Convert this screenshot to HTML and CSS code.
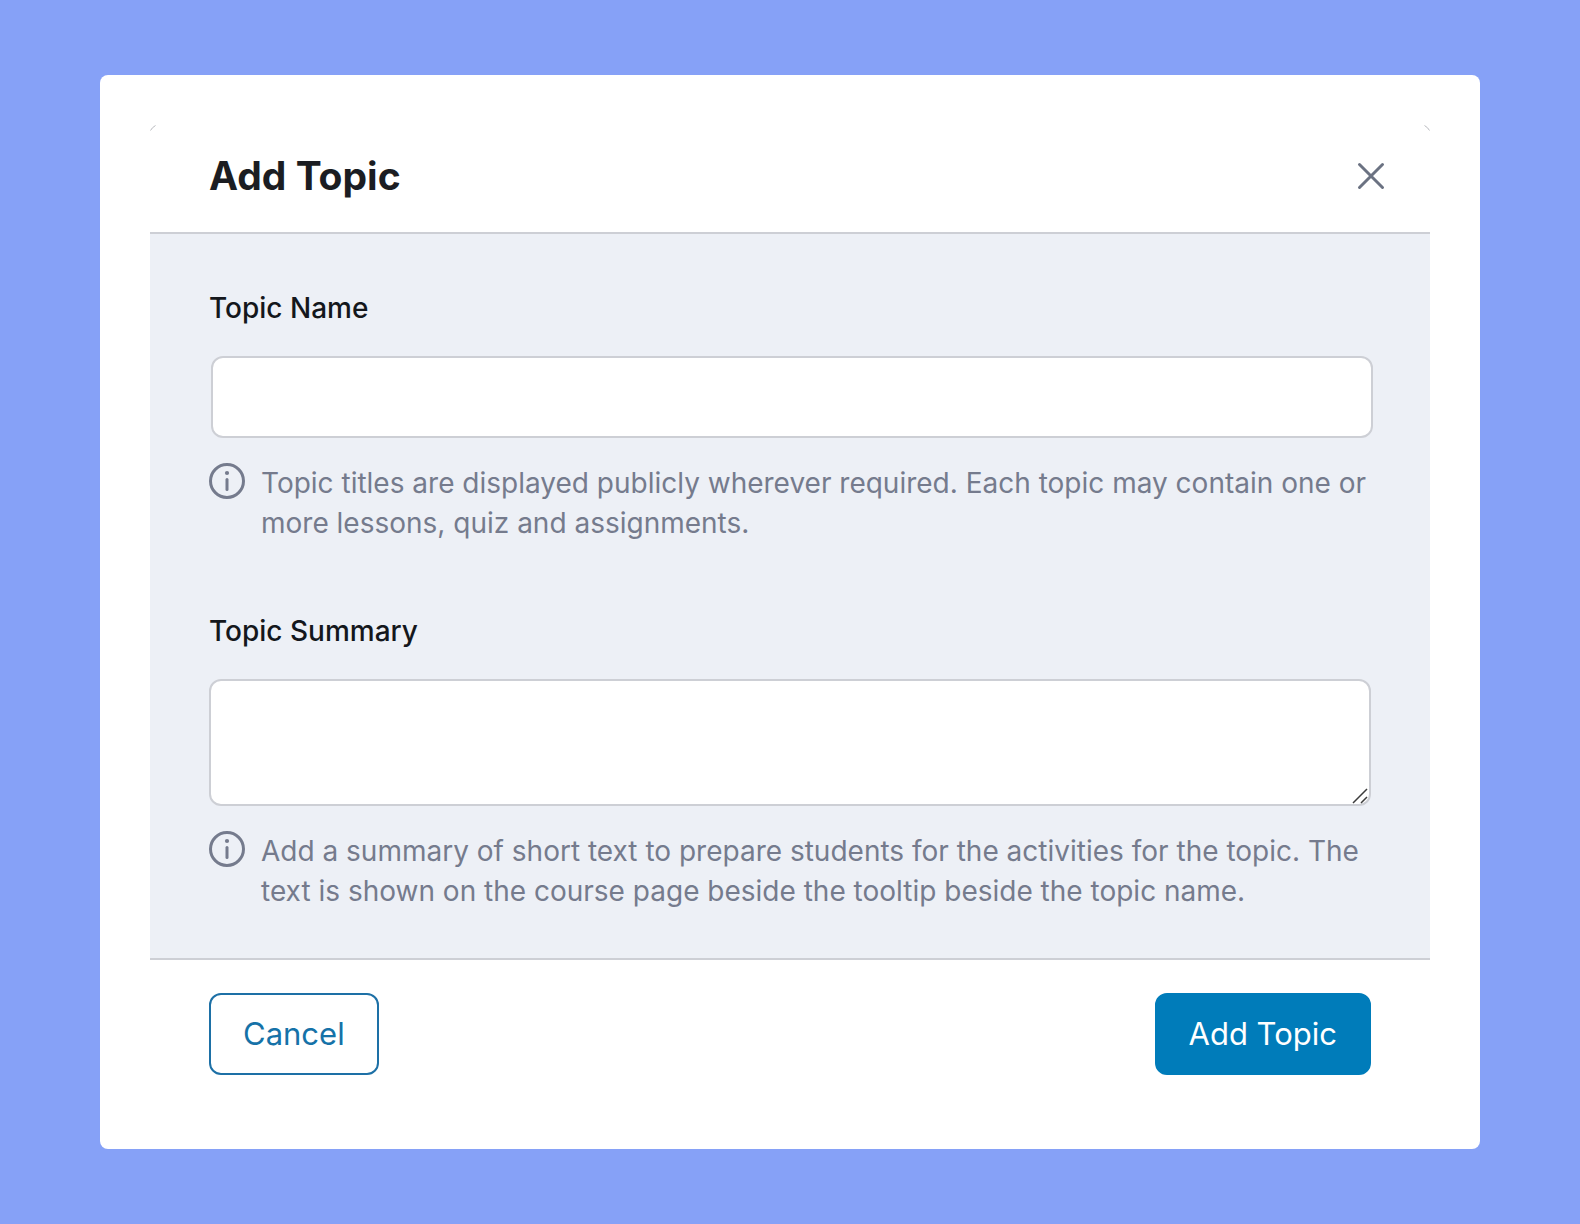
FILE: index.html
```html
<!DOCTYPE html>
<html lang="en">
<head>
    <meta charset="UTF-8">
    <meta name="viewport" content="width=device-width, initial-scale=1.0">
    <title>Add Topic</title>
    <link rel="stylesheet" href="styles.css">
</head>
<body>
    <main class="frame">
        <form class="modal">
            <svg class="corner corner-left" viewBox="0 0 6 6" aria-hidden="true"><path d="M0.5 5.5 Q2 2.5 5.5 0.5"/></svg>
            <svg class="corner corner-right" viewBox="0 0 6 6" aria-hidden="true"><path d="M0.5 0.5 Q4 2.5 5.5 5.5"/></svg>

            <header class="modal-header">
                <h1>Add Topic</h1>
                <button type="button" class="close" aria-label="Close">
                    <svg viewBox="0 0 28 28" aria-hidden="true"><path d="M2.5 2.5 L25.5 25.5 M25.5 2.5 L2.5 25.5"/></svg>
                </button>
            </header>

            <div class="modal-body">
                <div class="field">
                    <label for="topic-name">Topic Name</label>
                    <input type="text" id="topic-name" name="topic_name">
                    <div class="help">
                        <svg class="info" viewBox="0 0 36 36" aria-hidden="true">
                            <circle cx="18" cy="18" r="16.5"/>
                            <path d="M18 16.5 V26.5"/>
                            <circle class="dot" cx="18" cy="10" r="2.1"/>
                        </svg>
                        <p>Topic titles are displayed publicly wherever required. Each topic may contain one or more lessons, quiz and assignments.</p>
                    </div>
                </div>

                <div class="field">
                    <label for="topic-summary">Topic Summary</label>
                    <div class="textarea-wrap">
                        <textarea id="topic-summary" name="topic_summary"></textarea>
                        <svg class="grip" viewBox="0 0 16 16" aria-hidden="true"><path d="M1 15 L15 1 M9 15 L15 9"/></svg>
                    </div>
                    <div class="help">
                        <svg class="info" viewBox="0 0 36 36" aria-hidden="true">
                            <circle cx="18" cy="18" r="16.5"/>
                            <path d="M18 16.5 V26.5"/>
                            <circle class="dot" cx="18" cy="10" r="2.1"/>
                        </svg>
                        <p>Add a summary of short text to prepare students for the activities for the topic. The text is shown on the course page beside the tooltip beside the topic name.</p>
                    </div>
                </div>
            </div>

            <footer class="modal-footer">
                <button type="button" class="btn btn-outline">Cancel</button>
                <button type="submit" class="btn btn-primary">Add Topic</button>
            </footer>
        </form>
    </main>
</body>
</html>
```
FILE: styles.css
```css
* {
    box-sizing: border-box;
}

body {
    margin: 0;
    padding: 75px 100px;
    min-height: 100vh;
    background-color: #86a1f7;
    font-family: Inter, "Liberation Sans", sans-serif;
    font-size: 28px;
    line-height: 40px;
    color: #14171c;
}

h1, p {
    margin: 0;
}

.frame {
    padding: 50px;
    background-color: #fff;
    border-radius: 8px;
}

.modal {
    position: relative;
}

/* Rounded corner marks */
.corner {
    position: absolute;
    top: 0;
    width: 6px;
    height: 6px;
    fill: none;
    stroke: #b8babf;
}

.corner-left {
    left: 0;
}

.corner-right {
    right: 0;
}

/* Header */
.modal-header {
    display: flex;
    align-items: center;
    justify-content: space-between;
    padding: 27px 45px 32px 59px;
    border-bottom: 2px solid #cdcfd5;
}

.modal-header h1 {
    font-size: 39px;
    line-height: 48px;
    font-weight: 700;
    color: #1b1d22;
}

.close {
    display: flex;
    padding: 0;
    border: none;
    background: none;
    cursor: pointer;
}

.close svg {
    width: 28px;
    height: 28px;
    fill: none;
    stroke: #6b7282;
    stroke-width: 3;
    stroke-linecap: round;
}

/* Fields */
.modal-body {
    display: flex;
    flex-direction: column;
    gap: 68px;
    padding: 54px 59px 47px;
    background-color: #edf0f6;
    border-bottom: 2px solid #cdcfd5;
}

.field {
    display: flex;
    flex-direction: column;
}

.field label {
    margin-bottom: 28px;
    font-weight: 500;
}

.field input,
.field textarea {
    display: block;
    border: 2px solid #cdcfd5;
    border-radius: 12px;
    background-color: #fff;
    padding: 8px 20px;
    font: inherit;
    color: inherit;
}

.field input {
    width: 100%;
    height: 82px;
    margin-left: 2px;
}

.textarea-wrap {
    position: relative;
}

.field textarea {
    width: 100%;
    height: 127px;
    resize: none;
}

.grip {
    position: absolute;
    right: 3px;
    bottom: 2px;
    width: 16px;
    height: 16px;
    stroke: #3c3c3c;
    stroke-width: 1.5;
    pointer-events: none;
}

.help {
    display: flex;
    align-items: flex-start;
    gap: 16px;
    margin-top: 25px;
    color: #757b8d;
}

.info {
    flex: none;
    width: 36px;
    height: 36px;
    fill: none;
    stroke: #757b8d;
    stroke-width: 3;
    stroke-linecap: round;
}

.info .dot {
    fill: #757b8d;
    stroke: none;
}

/* Footer */
.modal-footer {
    display: flex;
    justify-content: space-between;
    padding: 33px 59px 24px;
}

.btn {
    height: 82px;
    padding: 0 32px;
    border: 2px solid #1d70a6;
    border-radius: 12px;
    font-family: inherit;
    font-size: 31px;
    line-height: 40px;
    cursor: pointer;
}

.btn-outline {
    background-color: #fff;
    color: #1572a8;
}

.btn-primary {
    background-color: #007cba;
    border-color: #007cba;
    color: #fff;
}
```
